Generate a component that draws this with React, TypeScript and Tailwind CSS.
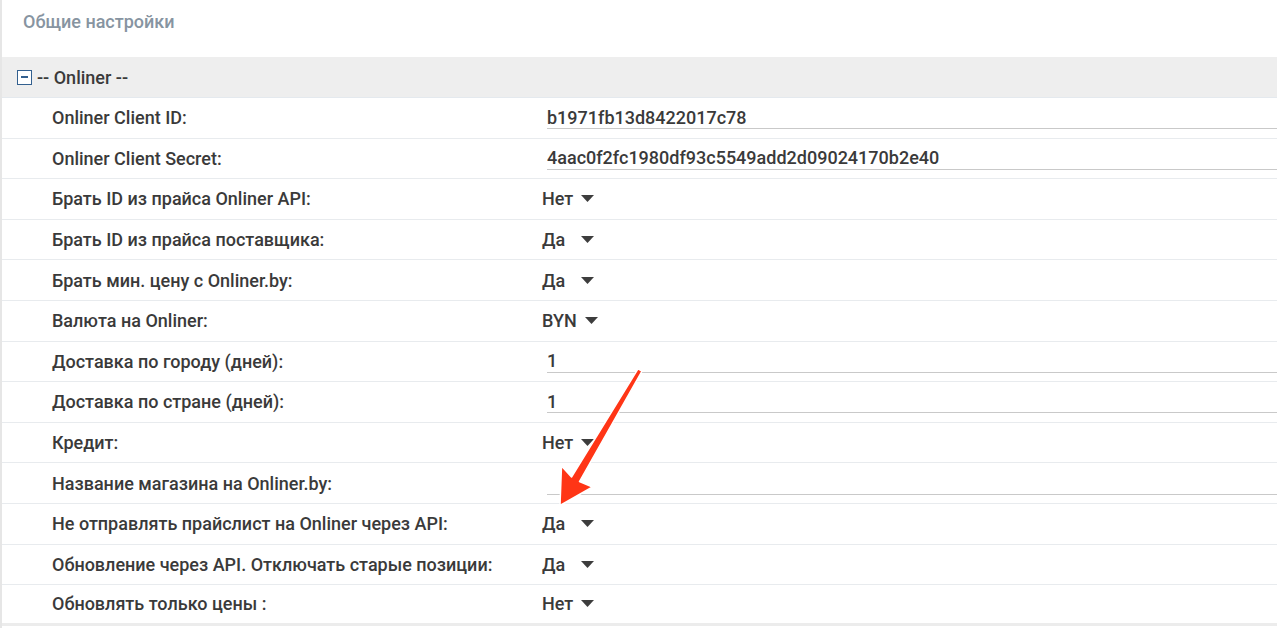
import React from 'react'

type Row = {
  label: string
  kind: 'input' | 'select'
  value: string
}

const rows: Row[] = [
  { label: 'Onliner Client ID:', kind: 'input', value: 'b1971fb13d8422017c78' },
  { label: 'Onliner Client Secret:', kind: 'input', value: '4aac0f2fc1980df93c5549add2d09024170b2e40' },
  { label: 'Брать ID из прайса Onliner API:', kind: 'select', value: 'Нет' },
  { label: 'Брать ID из прайса поставщика:', kind: 'select', value: 'Да' },
  { label: 'Брать мин. цену с Onliner.by:', kind: 'select', value: 'Да' },
  { label: 'Валюта на Onliner:', kind: 'select', value: 'BYN' },
  { label: 'Доставка по городу (дней):', kind: 'input', value: '1' },
  { label: 'Доставка по стране (дней):', kind: 'input', value: '1' },
  { label: 'Кредит:', kind: 'select', value: 'Нет' },
  { label: 'Название магазина на Onliner.by:', kind: 'input', value: '' },
  { label: 'Не отправлять прайслист на Onliner через API:', kind: 'select', value: 'Да' },
  { label: 'Обновление через API. Отключать старые позиции:', kind: 'select', value: 'Да' },
  { label: 'Обновлять только цены :', kind: 'select', value: 'Нет' },
]

function Caret() {
  return (
    <svg width="13" height="7" viewBox="0 0 13 7" className="ml-2 shrink-0">
      <path d="M0 0 L13 0 L6.5 7 Z" fill="#3d3d3d" />
    </svg>
  )
}

function Value({ row }: { row: Row }) {
  if (row.kind === 'input') {
    return (
      <input
        readOnly
        value={row.value}
        className="ml-[5px] h-[23px] flex-1 border-b border-[#c9c9c9] bg-transparent text-[18px] font-medium leading-[20px] text-[#3a3a3a] outline-none"
      />
    )
  }
  return (
    <div className="flex items-center">
      <span className="min-w-[31px] text-[18px] font-medium text-[#3a3a3a]">{row.value}</span>
      <Caret />
    </div>
  )
}

export default function App() {
  return (
    <div
      className="relative h-[628px] w-full overflow-hidden border-l-2 border-[#e6e6e6] bg-white"
      style={{ fontFamily: 'Roboto, "Noto Sans", sans-serif' }}
    >
      {/* Title */}
      <div className="h-[57px] pl-[21px] pt-[11px] text-[18px] font-medium leading-[22px] text-[#8794a1]">
        Общие настройки
      </div>

      {/* Group header */}
      <div className="flex h-[41px] items-center border-b border-[#e4e9ee] bg-[#eeeeee] pl-[15px] text-[18px] font-medium text-[#3a3a3a]">
        <span className="mr-[5px] flex h-[15px] w-[15px] items-center justify-center border border-[#33608f] bg-white">
          <span className="block h-[1.5px] w-[7px] bg-[#33608f]" />
        </span>
        -- Onliner --
      </div>

      {/* Rows */}
      {rows.map((row, i) => (
        <div
          key={i}
          className={
            'flex h-[40.6px] items-center border-b ' +
            (i === rows.length - 1 ? 'border-b-[3px] border-[#ececec]' : 'border-[#e8ebee]')
          }
        >
          <div className="w-[540px] shrink-0 pl-[50px] text-[18px] font-medium text-[#3a3a3a]">{row.label}</div>
          <div className="flex flex-1 items-center">
            <Value row={row} />
          </div>
        </div>
      ))}

      {/* Red annotation arrow */}
      <svg className="pointer-events-none absolute left-0 top-0" width="1277" height="628">
        <polygon
          points="636,368.8 640,371.2 577.5,481.5 590.5,487 558,505.5 559.5,466 569.5,477"
          fill="#ff3516"
          stroke="#ffffff"
          strokeWidth="1.5"
          strokeLinejoin="round"
        />
      </svg>
    </div>
  )
}
